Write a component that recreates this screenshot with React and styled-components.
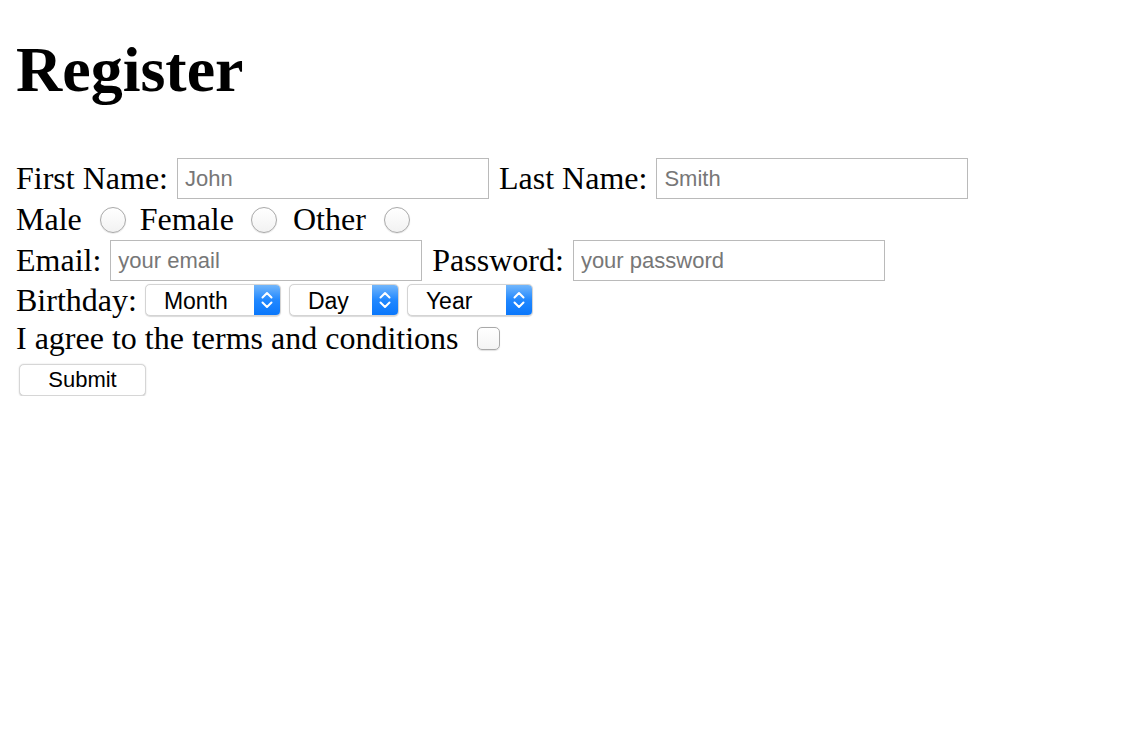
import React from "react";
import styled, { createGlobalStyle } from "styled-components";

const GlobalStyle = createGlobalStyle`
  html, body {
    margin: 0;
    padding: 0;
    background: #ffffff;
  }
  body {
    font-family: "Liberation Serif", "Times New Roman", serif;
    color: #000000;
  }
`;

const Page = styled.div`
  padding: 0 16px;
`;

const Title = styled.h1`
  margin: 33px 0 51px;
  font-size: 64px;
  line-height: 74px;
  font-weight: 700;
`;

const Form = styled.form`
  display: flex;
  flex-direction: column;
  align-items: flex-start;
`;

const Row = styled.div`
  display: flex;
  align-items: center;
  height: ${(p) => p.$h || 41}px;
`;

const Label = styled.span`
  font-size: 32px;
  line-height: 37px;
  white-space: nowrap;
  margin-right: ${(p) => p.$gap || 9}px;
`;

const TextInput = styled.input`
  box-sizing: border-box;
  width: 312px;
  height: 41px;
  margin: 0 10px 0 0;
  padding: 1px 7px 0;
  border: 1px solid #bababa;
  border-radius: 0;
  font-family: "Liberation Sans", Arial, sans-serif;
  font-size: 22px;
  color: #000;
  outline: none;

  &::placeholder {
    color: #777777;
  }
`;

const Radio = styled.input.attrs({ type: "radio" })`
  appearance: none;
  box-sizing: border-box;
  width: 26px;
  height: 26px;
  margin: 0 ${(p) => p.$after || 14}px 0 0;
  border-radius: 50%;
  border: 1px solid #a9a9a9;
  background: linear-gradient(#ffffff, #f2f2f2);
  box-shadow: inset 0 1px 1px rgba(255, 255, 255, 0.9), 0 0.5px 1px rgba(0, 0, 0, 0.15);
`;

const Checkbox = styled.input.attrs({ type: "checkbox" })`
  appearance: none;
  box-sizing: border-box;
  width: 23px;
  height: 23px;
  margin: 0;
  border-radius: 5px;
  border: 1px solid #a9a9a9;
  background: linear-gradient(#ffffff, #f4f4f4);
  box-shadow: 0 0.5px 1px rgba(0, 0, 0, 0.12);
`;

const SelectBox = styled.div`
  box-sizing: border-box;
  display: inline-flex;
  align-items: stretch;
  width: ${(p) => p.$w}px;
  height: 32px;
  margin-right: 8px;
  border: 1px solid #d4d4d4;
  border-radius: 5px;
  background: #ffffff;
  box-shadow: 0 0.5px 1px rgba(0, 0, 0, 0.15);
  overflow: hidden;
`;

const NativeSelect = styled.select`
  appearance: none;
  flex: 1;
  min-width: 0;
  border: none;
  background: transparent;
  padding: 2px 0 0 ${(p) => p.$pad || 18}px;
  font-family: "Liberation Sans", Arial, sans-serif;
  font-size: 23px;
  color: #000;
  outline: none;
`;

const Stepper = styled.span`
  width: 26px;
  display: flex;
  align-items: center;
  justify-content: center;
  background: linear-gradient(#72b6fb, #2188ff 50%, #0a77fb);
`;

const SubmitButton = styled.button`
  box-sizing: border-box;
  width: 127px;
  height: 32px;
  margin: 6px 0 0 3px;
  padding: 0;
  border: 1px solid #d6d6d6;
  border-radius: 5px;
  background: #ffffff;
  box-shadow: 0 0.5px 1.5px rgba(0, 0, 0, 0.2);
  font-family: "Liberation Sans", Arial, sans-serif;
  font-size: 22px;
  color: #000;
`;

const Chevrons = () => (
  <svg width="14" height="22" viewBox="0 0 14 22" fill="none">
    <path d="M2.5 8.5 L7 4 L11.5 8.5" stroke="#fff" strokeWidth="2" strokeLinecap="round" strokeLinejoin="round" />
    <path d="M2.5 13.5 L7 18 L11.5 13.5" stroke="#fff" strokeWidth="2" strokeLinecap="round" strokeLinejoin="round" />
  </svg>
);

const DateSelect = ({ width, placeholder, pad }) => (
  <SelectBox $w={width}>
    <NativeSelect $pad={pad} defaultValue="">
      <option value="" disabled>
        {placeholder}
      </option>
    </NativeSelect>
    <Stepper>
      <Chevrons />
    </Stepper>
  </SelectBox>
);

export default function App() {
  return (
    <Page>
      <GlobalStyle />
      <Title>Register</Title>
      <Form onSubmit={(e) => e.preventDefault()}>
        <Row>
          <Label>First Name:</Label>
          <TextInput placeholder="John" />
          <Label>Last Name:</Label>
          <TextInput placeholder="Smith" />
        </Row>
        <Row>
          <Label $gap={18}>Male</Label>
          <Radio name="gender" $after={14} />
          <Label $gap={17}>Female</Label>
          <Radio name="gender" $after={16} />
          <Label $gap={18}>Other</Label>
          <Radio name="gender" />
        </Row>
        <Row>
          <Label>Email:</Label>
          <TextInput type="email" placeholder="your email" />
          <Label>Password:</Label>
          <TextInput type="password" placeholder="your password" />
        </Row>
        <Row $h={38}>
          <Label $gap={8}>Birthday:</Label>
          <DateSelect width={136} placeholder="Month" pad={18} />
          <DateSelect width={110} placeholder="Day" pad={18} />
          <DateSelect width={126} placeholder="Year" pad={18} />
        </Row>
        <Row $h={39}>
          <Label $gap={18}>I agree to the terms and conditions</Label>
          <Checkbox />
        </Row>
        <SubmitButton type="submit">Submit</SubmitButton>
      </Form>
    </Page>
  );
}
